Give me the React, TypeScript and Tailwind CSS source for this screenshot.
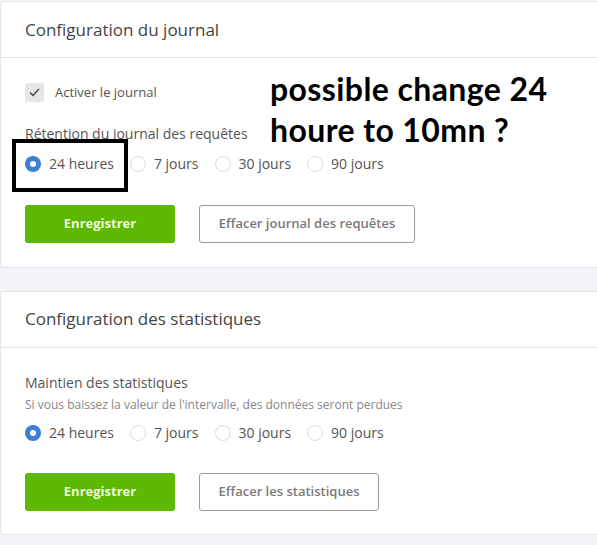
import React from "react";

const options = ["24 heures", "7 jours", "30 jours", "90 jours"];

function Radios() {
	return (
		<div className="flex items-center">
			{options.map((opt, i) => (
				<label key={opt} className="flex items-center mr-4 h-6">
					<span
						className={
							i === 0
								? "size-4 rounded-full bg-[#3d7fd4] flex items-center justify-center"
								: "size-4 rounded-full border border-[#dcdcdc] bg-white"
						}
					>
						{i === 0 && <span className="size-[6px] rounded-full bg-white" />}
					</span>
					<span className="ml-2 text-[14px] text-[#555]">{opt}</span>
				</label>
			))}
		</div>
	);
}

function Buttons({ clear, width }: { clear: string; width: string }) {
	return (
		<div className="flex gap-6">
			<button className="w-[150px] h-[38px] rounded-[3px] bg-[#5cb800] text-[13px] font-bold text-[#eef8de]">
				Enregistrer
			</button>
			<button
				className={`${width} h-[38px] rounded-[3px] border border-[#9a9a9a] bg-white text-[13px] font-semibold text-[#7a7a7a]`}
			>
				{clear}
			</button>
		</div>
	);
}

export default function App() {
	return (
		<div
			className="relative min-h-[545px] bg-[#f3f4f7] pt-px"
			style={{ fontFamily: '"Open Sans", "Noto Sans", sans-serif' }}
		>
			<div className="bg-white border border-r-0 border-[#e4e5e9] rounded-l-[3px]">
				<div className="h-[56px] px-6 flex items-center border-b border-[#e4e5e9]">
					<h2 className="text-[17px] text-[#444]">Configuration du journal</h2>
				</div>
				<div className="px-6 pt-[25px] pb-[24px]">
					<div className="flex items-center">
						<span className="size-[19px] rounded-[2px] bg-[#e6e6e6] flex items-center justify-center">
							<svg width="11" height="9" viewBox="0 0 11 9" fill="none">
								<path d="M1 4.5 L4 7.5 L10 1" stroke="#444" strokeWidth="1.3" />
							</svg>
						</span>
						<span className="ml-[11px] text-[13px] text-[#555]">Activer le journal</span>
					</div>
					<div className="mt-[21px] text-[14px] text-[#555] leading-[20px]">
						Rétention du journal des requêtes
					</div>
					<div className="mt-[8px]">
						<Radios />
					</div>
					<div className="mt-[29px]">
						<Buttons clear="Effacer journal des requêtes" width="w-[216px]" />
					</div>
				</div>
			</div>

			<div className="mt-[23px] bg-white border border-r-0 border-[#e4e5e9] rounded-l-[3px]">
				<div className="h-[56px] px-6 flex items-center border-b border-[#e4e5e9]">
					<h2 className="text-[17px] text-[#444]">Configuration des statistiques</h2>
				</div>
				<div className="px-6 pt-[25px] pb-[23px]">
					<div className="text-[14px] text-[#555] leading-[20px]">Maintien des statistiques</div>
					<div className="text-[12px] text-[#888] leading-[18px] mt-[3px]">
						Si vous baissez la valeur de l'intervalle, des données seront perdues
					</div>
					<div className="mt-[7px]">
						<Radios />
					</div>
					<div className="mt-[28px]">
						<Buttons clear="Effacer les statistiques" width="w-[180px]" />
					</div>
				</div>
			</div>

			<div className="absolute left-[12px] top-[139px] w-[116px] h-[53px] border-[4px] border-black" />
			<div
				className="absolute left-[270px] top-[68px] text-[32px] font-bold text-black leading-[41px] tracking-[0.4px]"
				style={{ fontFamily: "Lato, sans-serif" }}
			>
				possible change 24
				<br />
				houre to 10mn ?
			</div>
		</div>
	);
}
